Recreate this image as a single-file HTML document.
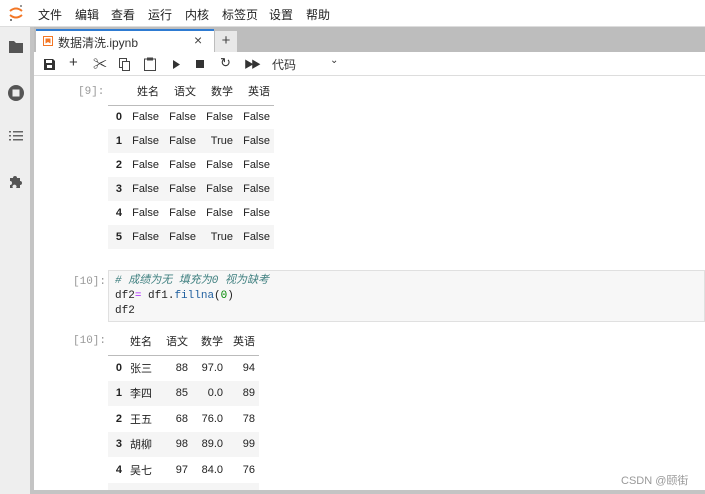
<!DOCTYPE html>
<html><head><meta charset="utf-8"><style>
*{margin:0;padding:0;box-sizing:border-box}
html,body{width:705px;height:494px;overflow:hidden}
body{background:#fff;font-family:"Liberation Sans","Noto Sans CJK SC",sans-serif;position:relative;color:#222}
.abs{position:absolute}
.menu{left:0;top:0;width:705px;height:27px;background:#fff;border-bottom:1px solid #ddd}
.menu span{position:absolute;top:6px;font-size:12px;color:#222}
.side{left:0;top:27px;width:31px;height:467px;background:#eeeeee}
.strip{left:30px;top:27px;width:4px;height:467px;background:#c4c4c4}
.tabbar{left:34px;top:27px;width:671px;height:25px;background:#bdbdbd}
.tab{left:36px;top:29px;width:178px;height:23px;background:#fff;border-top:2px solid #2e7bd2}
.plus{left:215px;top:31px;width:22px;height:21px;background:#e8e8e8;text-align:center;font-size:15px;color:#444;line-height:20px}
.tool{left:34px;top:52px;width:671px;height:24px;background:#fff;border-bottom:1px solid #ddd}
.tool span{position:absolute;top:4px;font-size:12px;color:#333}
.bottom{left:30px;top:490px;width:675px;height:4px;background:#c4c4c4}
.clip{left:34px;top:77px;width:671px;height:413px;overflow:hidden}
table{border-collapse:collapse;font-size:11px;position:absolute}
td,th{height:24px;padding:0 4px;text-align:right;color:#222}
th{font-weight:bold}
thead th{border-bottom:1px solid #bbb;font-weight:normal;font-size:11px;height:27px}
tbody tr:nth-child(even){background:#f5f5f5}
.prompt{font-family:"Liberation Mono",monospace;font-size:11px;color:#999}
.code{left:74px;top:193px;width:597px;height:52px;background:#f7f7f7;border:1px solid #e0e0e0;font-family:"Liberation Mono","Noto Sans CJK SC",monospace;font-size:11px;line-height:15px;padding:3px 6px}
</style></head><body>
<div class="abs menu">
<svg class="abs" style="left:8px;top:4px" width="16" height="18" viewBox="0 0 16 18"><path d="M2 7 Q8 2 14 7" stroke="#f37726" stroke-width="2" fill="none"/><path d="M2 11 Q8 16 14 11" stroke="#f37726" stroke-width="2" fill="none"/><circle cx="3" cy="16" r="1" fill="#555"/><circle cx="13" cy="2" r="1" fill="#777"/></svg>
<span style="left:38px">文件</span><span style="left:75px">编辑</span><span style="left:111px">查看</span><span style="left:148px">运行</span><span style="left:185px">内核</span><span style="left:222px">标签页</span><span style="left:269px">设置</span><span style="left:306px">帮助</span>
</div>
<div class="abs side"></div>
<div class="abs strip"></div>
<svg class="abs" style="left:8px;top:40px" width="16" height="14" viewBox="0 0 16 14"><path d="M1 1h5l2 2h7v10H1z" fill="#555"/></svg>
<svg class="abs" style="left:7px;top:84px" width="18" height="18" viewBox="0 0 18 18"><circle cx="9" cy="9" r="8" fill="#555"/><rect x="5.5" y="5.5" width="7" height="7" fill="#eee"/></svg>
<svg class="abs" style="left:9px;top:130px" width="14" height="12" viewBox="0 0 14 12" fill="#666"><rect x="0" y="1" width="2" height="1.5"/><rect x="4" y="1" width="10" height="1.5"/><rect x="0" y="5" width="2" height="1.5"/><rect x="4" y="5" width="10" height="1.5"/><rect x="0" y="9" width="2" height="1.5"/><rect x="4" y="9" width="10" height="1.5"/></svg>
<svg class="abs" style="left:8px;top:173px" width="16" height="16" viewBox="0 0 16 16"><path d="M2 5h3a2 2 0 1 1 4 0h3v3a2 2 0 1 1 0 4v3H8a2 2 0 1 0-3 0H2v-3a2 2 0 1 0 0-4z" fill="#555"/></svg>
<div class="abs tabbar"></div>
<div class="abs tab">
<svg class="abs" style="left:7px;top:5px" width="10" height="10" viewBox="0 0 10 10"><rect x="0.5" y="0.5" width="9" height="9" fill="#fff" stroke="#f37726"/><path d="M2.5 2.5h5v5l-2.5-1.5-2.5 1.5z" fill="#f37726"/></svg>
<span class="abs" style="left:22px;top:3px;font-size:12px;color:#333">数据清洗.ipynb</span>
<span class="abs" style="left:158px;top:1px;font-size:14px;color:#444">×</span>
</div>
<div class="abs plus">+</div>
<div class="abs tool">
<svg class="abs" style="left:10px;top:7px" width="11" height="11" viewBox="0 0 11 11"><path d="M0 0h9l2 2v9H0z" fill="#333"/><rect x="2" y="1" width="6" height="3" fill="#fff"/><rect x="3" y="6" width="5" height="3" fill="#fff"/></svg>
<span style="left:35px;top:2px;font-size:15px">+</span>
<span style="left:59px;top:2px;font-size:14px">✂</span>
<svg class="abs" style="left:85px;top:6px" width="11" height="13" viewBox="0 0 11 13"><rect x="0.5" y="0.5" width="7" height="9" fill="none" stroke="#444"/><rect x="3.5" y="3.5" width="7" height="9" fill="#fff" stroke="#444"/></svg>
<svg class="abs" style="left:110px;top:5px" width="12" height="14" viewBox="0 0 12 14"><rect x="0.5" y="2" width="11" height="11.5" fill="none" stroke="#444"/><rect x="3" y="0.5" width="6" height="3" fill="#444"/></svg>
<svg class="abs" style="left:139px;top:8px" width="8" height="9" viewBox="0 0 8 9"><path d="M0 0l7 4.5L0 9z" fill="#333"/></svg>
<svg class="abs" style="left:162px;top:8px" width="8" height="8"><rect width="8" height="8" fill="#333"/></svg>
<span style="left:186px;top:3px;font-size:13px">↻</span>
<span style="left:210px;top:4px;font-size:10px;letter-spacing:-3px">▶▶</span>
<span style="left:238px">代码</span>
<span style="left:296px;top:3px;font-size:10px">⌄</span>
</div>

<div class="abs clip">
<div class="abs prompt" style="left:44px;top:9px">[9]:</div>
<table style="left:74px;top:1px">
<thead><tr><th style="width:18px"></th><th style="width:37px">姓名</th><th style="width:37px">语文</th><th style="width:37px">数学</th><th style="width:37px">英语</th></tr></thead>
<tbody>
<tr><th>0</th><td>False</td><td>False</td><td>False</td><td>False</td></tr>
<tr><th>1</th><td>False</td><td>False</td><td>True</td><td>False</td></tr>
<tr><th>2</th><td>False</td><td>False</td><td>False</td><td>False</td></tr>
<tr><th>3</th><td>False</td><td>False</td><td>False</td><td>False</td></tr>
<tr><th>4</th><td>False</td><td>False</td><td>False</td><td>False</td></tr>
<tr><th>5</th><td>False</td><td>False</td><td>True</td><td>False</td></tr>
</tbody></table>

<div class="abs prompt" style="left:39px;top:199px">[10]:</div>
<div class="abs code"><span style="color:#408080;font-style:italic"># 成绩为无 填充为0 视为缺考</span><br>df2<span style="color:#aa22ff">=</span> df1.<span style="color:#1f5f9f">fillna</span>(<span style="color:#080">0</span>)<br>df2</div>

<div class="abs prompt" style="left:39px;top:258px">[10]:</div>
<table style="left:74px;top:251px">
<thead><tr><th style="width:18px"></th><th style="width:34px;text-align:left">姓名</th><th style="width:32px">语文</th><th style="width:35px">数学</th><th style="width:32px">英语</th></tr></thead>
<tbody>
<tr style="height:25.5px"><th>0</th><td style="text-align:left">张三</td><td>88</td><td>97.0</td><td>94</td></tr>
<tr style="height:25.5px"><th>1</th><td style="text-align:left">李四</td><td>85</td><td>0.0</td><td>89</td></tr>
<tr style="height:25.5px"><th>2</th><td style="text-align:left">王五</td><td>68</td><td>76.0</td><td>78</td></tr>
<tr style="height:25.5px"><th>3</th><td style="text-align:left">胡柳</td><td>98</td><td>89.0</td><td>99</td></tr>
<tr style="height:25.5px"><th>4</th><td style="text-align:left">吴七</td><td>97</td><td>84.0</td><td>76</td></tr>
<tr style="height:25.5px"><th></th><td></td><td></td><td></td><td></td></tr>
</tbody></table>
</div>

<div class="abs" style="left:621px;top:472px;font-size:11px;color:#999">CSDN @颐街</div>
<div class="abs bottom"></div>
</body></html>
